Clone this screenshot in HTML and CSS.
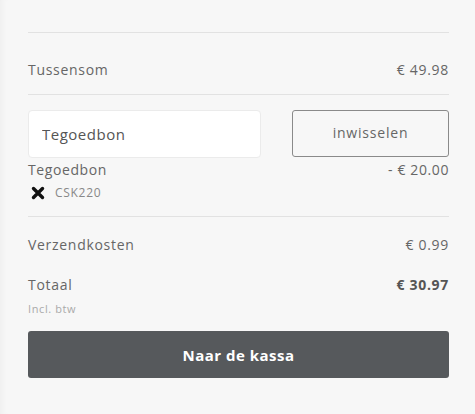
FILE: index.html
```html
<!DOCTYPE html>
<html lang="nl">
<head>
    <meta charset="UTF-8">
    <meta name="viewport" content="width=device-width, initial-scale=1.0">
    <title>Winkelwagen</title>
    <link rel="stylesheet" href="styles.css">
</head>
<body>
    <div class="summary">
        <div class="top-spacer"></div>
        <div class="row row-sub">
            <span>Tussensom</span>
            <span>€ 49.98</span>
        </div>
        <div class="coupon">
            <div class="coupon-form">
                <input type="text" class="coupon-input" placeholder="Tegoedbon">
                <button class="btn-redeem">inwisselen</button>
            </div>
            <div class="coupon-line">
                <span>Tegoedbon</span>
                <span>- € 20.00</span>
            </div>
            <div class="coupon-code">
                <svg class="remove" width="14" height="14" viewBox="0 0 14 14">
                    <path d="M2.5 2.5 L11.5 11.5 M11.5 2.5 L2.5 11.5" stroke="#111" stroke-width="3.4" stroke-linecap="round"/>
                </svg>
                <span>CSK220</span>
            </div>
        </div>
        <div class="row row-ship">
            <span>Verzendkosten</span>
            <span>€ 0.99</span>
        </div>
        <div class="row row-total">
            <span>Totaal</span>
            <span class="total">€ 30.97</span>
        </div>
        <div class="vat">Incl. btw</div>
        <button class="btn-checkout">Naar de kassa</button>
    </div>
</body>
</html>
```

FILE: styles.css
```css
body {
    margin: 0;
    background-color: #f7f7f7;
    font-family: 'Open Sans', sans-serif;
    color: #666;
    height: 414px;
    overflow: hidden;
}
.summary {
    padding: 0 26px 0 28px;
    box-shadow: inset 6px 0 6px -4px rgba(0, 0, 0, 0.04);
    height: 100%;
}
.top-spacer {
    height: 32px;
    border-bottom: 1px solid #e2e2e2;
}
.row {
    display: flex;
    justify-content: space-between;
    align-items: center;
    font-size: 14px;
    letter-spacing: 0.7px;
    line-height: 20px;
}
.row-sub {
    padding: 27px 0 14px;
    border-bottom: 1px solid #e2e2e2;
}
.coupon {
    padding-top: 15px;
    border-bottom: 1px solid #e2e2e2;
    height: 122px;
    box-sizing: border-box;
}
.coupon-form {
    display: flex;
    justify-content: space-between;
}
.coupon-input {
    width: 233px;
    height: 48px;
    box-sizing: border-box;
    border: 1px solid #ebebeb;
    border-radius: 4px;
    background: #fff;
    padding: 0 13px;
    font-family: 'Open Sans', sans-serif;
    font-size: 15px;
    letter-spacing: 0.5px;
    outline: none;
}
.coupon-input::placeholder {
    color: #555;
}
.btn-redeem {
    width: 157px;
    height: 47px;
    box-sizing: border-box;
    border: 1px solid #8a8a8a;
    border-radius: 3px;
    background: #f7f7f7;
    color: #666;
    font-family: 'Open Sans', sans-serif;
    font-size: 14px;
    letter-spacing: 0.8px;
    padding-bottom: 4px;
}
.coupon-line {
    display: flex;
    justify-content: space-between;
    font-size: 14px;
    letter-spacing: 0.6px;
    line-height: 20px;
    margin-top: 2px;
}
.coupon-code {
    display: flex;
    align-items: center;
    margin-top: 5px;
    font-size: 12px;
    line-height: 16px;
    color: #888;
    letter-spacing: 0.7px;
}
.remove {
    margin: 0 10px 0 3px;
}
.row-ship {
    height: 56px;
}
.row-total {
    height: 24px;
}
.total {
    font-weight: bold;
    color: #555;
}
.vat {
    font-size: 11px;
    color: #aaa;
    letter-spacing: 0.6px;
    margin-top: 5px;
    line-height: 14px;
}
.btn-checkout {
    display: block;
    width: 100%;
    height: 47px;
    margin-top: 15px;
    border: none;
    border-radius: 3px;
    background-color: #56595c;
    color: #fff;
    font-family: 'Open Sans', sans-serif;
    font-weight: bold;
    font-size: 15px;
    letter-spacing: 0.5px;
}
```
